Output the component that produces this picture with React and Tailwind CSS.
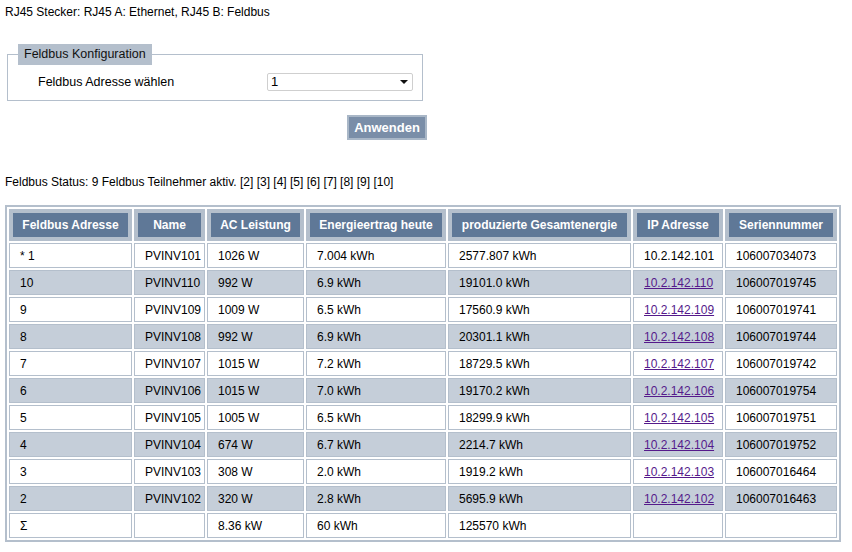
import React from 'react';

const columns = [
  { label: 'Feldbus Adresse', w: 'w-[123px]' },
  { label: 'Name', w: 'w-[71px]' },
  { label: 'AC Leistung', w: 'w-[97px]' },
  { label: 'Energieertrag heute', w: 'w-[140px]' },
  { label: 'produzierte Gesamtenergie', w: 'w-[183px]' },
  { label: 'IP Adresse', w: 'w-[90px]' },
  { label: 'Seriennummer', w: 'w-[112px]' },
];

const devices = [
  { addr: '* 1', name: 'PVINV101', ac: '1026 W', today: '7.004 kWh', total: '2577.807 kWh', ip: '10.2.142.101', serial: '106007034073', self: true },
  { addr: '10', name: 'PVINV110', ac: '992 W', today: '6.9 kWh', total: '19101.0 kWh', ip: '10.2.142.110', serial: '106007019745' },
  { addr: '9', name: 'PVINV109', ac: '1009 W', today: '6.5 kWh', total: '17560.9 kWh', ip: '10.2.142.109', serial: '106007019741' },
  { addr: '8', name: 'PVINV108', ac: '992 W', today: '6.9 kWh', total: '20301.1 kWh', ip: '10.2.142.108', serial: '106007019744' },
  { addr: '7', name: 'PVINV107', ac: '1015 W', today: '7.2 kWh', total: '18729.5 kWh', ip: '10.2.142.107', serial: '106007019742' },
  { addr: '6', name: 'PVINV106', ac: '1015 W', today: '7.0 kWh', total: '19170.2 kWh', ip: '10.2.142.106', serial: '106007019754' },
  { addr: '5', name: 'PVINV105', ac: '1005 W', today: '6.5 kWh', total: '18299.9 kWh', ip: '10.2.142.105', serial: '106007019751' },
  { addr: '4', name: 'PVINV104', ac: '674 W', today: '6.7 kWh', total: '2214.7 kWh', ip: '10.2.142.104', serial: '106007019752' },
  { addr: '3', name: 'PVINV103', ac: '308 W', today: '2.0 kWh', total: '1919.2 kWh', ip: '10.2.142.103', serial: '106007016464' },
  { addr: '2', name: 'PVINV102', ac: '320 W', today: '2.8 kWh', total: '5695.9 kWh', ip: '10.2.142.102', serial: '106007016463' },
];

const Cell = ({ children, alt }) => (
  <td
    className={`h-[25px] border border-[#b4bfcc] pl-[10px] align-middle whitespace-nowrap ${alt ? 'bg-[#c5ced9]' : 'bg-white'}`}
  >
    {children}
  </td>
);

export default function App() {
  return (
    <div
      className="min-h-[552px] bg-white text-[12px] leading-[14px] text-black"
      style={{ fontFamily: '"Liberation Sans", Arial, sans-serif' }}
    >
      <p className="pl-[5px] pt-[5px]">RJ45 Stecker: RJ45 A: Ethernet, RJ45 B: Feldbus</p>

      {/* Feldbus Konfiguration */}
      <fieldset className="ml-[7px] mt-[25px] w-[416px] border border-[#b4bfcc]">
        <legend className="ml-[10px] bg-[#b4bfcc] px-[6px] text-[12.5px] leading-[21px] text-[#111]">
          Feldbus Konfiguration
        </legend>
        <div className="flex items-center pb-[9px] pl-[30px] pt-[8px]">
          <span className="w-[229px] text-[12.5px]">Feldbus Adresse wählen</span>
          <div className="flex h-[18px] w-[146px] items-center justify-between rounded-[2px] border border-[#cfcfcf] bg-white pl-[3px] pr-[4px] text-[13px]">
            <span>1</span>
            <svg width="8" height="4" viewBox="0 0 8 4">
              <path d="M0 0h8L4 4z" fill="#111" />
            </svg>
          </div>
        </div>
      </fieldset>

      <div className="mt-[14px] flex w-[427px] justify-end">
        <button className="h-[25px] w-[80px] border-2 border-[#a9b7c7] bg-[#7a8ea8] text-[13px] font-bold text-white">
          Anwenden
        </button>
      </div>

      <p className="mt-[35px] pl-[5px]">
        Feldbus Status: 9 Feldbus Teilnehmer aktiv. [2] [3] [4] [5] [6] [7] [8] [9] [10]
      </p>

      {/* Teilnehmer */}
      <table className="ml-[5px] mt-[16px] w-[836px] table-fixed border-separate border-spacing-[2px] border-2 border-[#b4bfcc] bg-white">
        <thead>
          <tr>
            {columns.map((c) => (
              <th
                key={c.label}
                className={`${c.w} h-[32px] border-4 border-[#b4bfcc] bg-[#5f7897] text-center font-bold whitespace-nowrap text-white`}
              >
                {c.label}
              </th>
            ))}
          </tr>
        </thead>
        <tbody>
          {devices.map((d, i) => {
            const alt = i % 2 === 1;
            return (
              <tr key={d.name}>
                <Cell alt={alt}>{d.addr}</Cell>
                <Cell alt={alt}>{d.name}</Cell>
                <Cell alt={alt}>{d.ac}</Cell>
                <Cell alt={alt}>{d.today}</Cell>
                <Cell alt={alt}>{d.total}</Cell>
                <Cell alt={alt}>
                  {d.self ? d.ip : <a href="#" className="text-[#551a8b] underline">{d.ip}</a>}
                </Cell>
                <Cell alt={alt}>{d.serial}</Cell>
              </tr>
            );
          })}
          <tr>
            <Cell>Σ</Cell>
            <Cell />
            <Cell>8.36 kW</Cell>
            <Cell>60 kWh</Cell>
            <Cell>125570 kWh</Cell>
            <Cell />
            <Cell />
          </tr>
        </tbody>
      </table>
    </div>
  );
}
